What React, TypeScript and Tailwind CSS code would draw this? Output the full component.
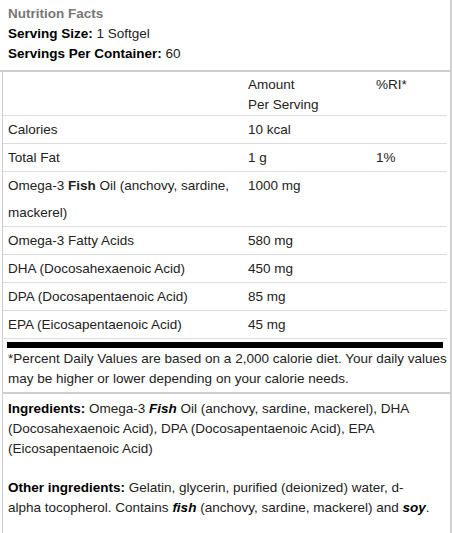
import React from 'react';

interface Row {
    name: React.ReactNode;
    amount: string;
    ri?: string;
}

const rows: Row[] = [
    { name: 'Calories', amount: '10 kcal' },
    { name: 'Total Fat', amount: '1 g', ri: '1%' },
    {
        name: (
            <>
                Omega-3 <b>Fish</b> Oil (anchovy, sardine, mackerel)
            </>
        ),
        amount: '1000 mg',
    },
    { name: 'Omega-3 Fatty Acids', amount: '580 mg' },
    { name: 'DHA (Docosahexaenoic Acid)', amount: '450 mg' },
    { name: 'DPA (Docosapentaenoic Acid)', amount: '85 mg' },
    { name: 'EPA (Eicosapentaenoic Acid)', amount: '45 mg' },
];

export default function App() {
    return (
        <div
            className="w-[452px] h-[533px] bg-white text-[#222] text-[13.5px] overflow-hidden"
            style={{ fontFamily: '"Liberation Sans", Arial, sans-serif' }}
        >
            <div className="h-full border-r-2 border-[#cfcfcf]">
                <div className="pl-2 pt-1 pb-[6px] leading-[20px]">
                    <div className="font-bold text-[#777]">Nutrition Facts</div>
                    <div>
                        <b className="text-black">Serving Size:</b> 1 Softgel
                    </div>
                    <div>
                        <b className="text-black">Servings Per Container:</b> 60
                    </div>
                </div>
                <div className="h-[2px] bg-[#cfcfcf]" />

                <div className="ml-[2px] h-full border-l border-[#cfcfcf] pr-[3px]">
                    <div className="grid grid-cols-[240px_128px_1fr] leading-[20px] pt-[3px] border-b border-[#ddd]">
                        <div />
                        <div className="pl-[5px]">
                            Amount
                            <br />
                            Per Serving
                        </div>
                        <div className="pl-[5px]">%RI*</div>
                    </div>
                    {rows.map((r, i) => (
                        <div
                            key={i}
                            className="grid grid-cols-[240px_128px_1fr] leading-[27px] border-b border-[#ddd]"
                        >
                            <div className="pl-[5px] pr-[3px]">{r.name}</div>
                            <div className="pl-[5px]">{r.amount}</div>
                            <div className="pl-[5px]">{r.ri}</div>
                        </div>
                    ))}

                    <div className="mt-[3px] mx-[4px] h-[6px] bg-black" />
                    <p className="pl-[5px] leading-[20px] pt-px pb-[3px]">
                        *Percent Daily Values are based on a 2,000 calorie diet. Your daily values may be
                        higher or lower depending on your calorie needs.
                    </p>
                    <div className="h-[2px] bg-[#cfcfcf] -mr-[3px]" />

                    <div className="pl-[5px] pr-[16px] pt-[5px] leading-[20px]">
                        <p>
                            <b className="text-black">Ingredients:</b> Omega-3{' '}
                            <b className="italic text-black">Fish</b> Oil (anchovy, sardine, mackerel), DHA
                            (Docosahexaenoic Acid), DPA (Docosapentaenoic Acid), EPA (Eicosapentaenoic Acid)
                        </p>
                        <p className="mt-[19px]">
                            <b className="text-black">Other ingredients:</b> Gelatin, glycerin, purified
                            (deionized) water, d-alpha tocopherol. Contains{' '}
                            <b className="italic text-black">fish</b> (anchovy, sardine, mackerel) and{' '}
                            <b className="italic text-black">soy</b>.
                        </p>
                    </div>
                </div>
            </div>
        </div>
    );
}
